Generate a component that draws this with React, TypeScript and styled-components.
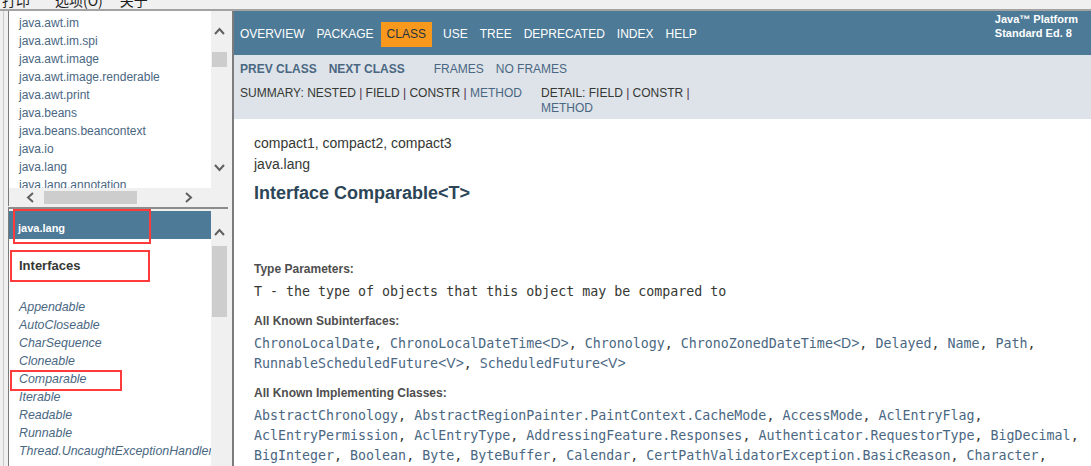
import React from "react";
import styled, { createGlobalStyle } from "styled-components";

const GlobalStyle = createGlobalStyle`
  html, body {
    margin: 0;
    padding: 0;
  }
  body {
    background: #f0f0f0;
    font-family: "Liberation Sans", Arial, sans-serif;
    overflow: hidden;
  }
`;

const Page = styled.div`
  width: 1091px;
  height: 466px;
  display: flex;
  flex-direction: column;
  overflow: hidden;
  background: #f0f0f0;
`;

/* window menu, almost scrolled out of view */
const MenuBar = styled.div`
  height: 9px;
  flex-shrink: 0;
  display: flex;
  overflow: hidden;
`;

const MenuItem = styled.span<{ $left: number }>`
  margin-left: ${(p) => p.$left}px;
  margin-top: -7px;
  font: 14px/14px "Noto Sans CJK SC", sans-serif;
  color: #1e1e1e;
  white-space: nowrap;
`;

const Frames = styled.div`
  flex: 1;
  display: flex;
  min-height: 0;
  border-top: 2px solid #a3a3a3;
`;

const LeftPane = styled.div`
  width: 232px;
  flex-shrink: 0;
  box-sizing: border-box;
  padding-left: 3px;
  display: flex;
`;

const LeftInner = styled.div`
  flex: 1;
  border-left: 1px solid #c9c9c9;
  padding-left: 4px;
  display: flex;
  flex-direction: column;
`;

const UpperFrame = styled.div`
  width: 220px;
  height: 195px;
  flex-shrink: 0;
  box-sizing: border-box;
  border-left: 1px solid #7a7a7a;
  display: grid;
  grid-template-columns: 202px 17px;
  grid-template-rows: 177px 18px;
`;

const PackageList = styled.div`
  background: #fff;
  overflow: hidden;
  padding: 3px 0 0 10px;
`;

const PackageLink = styled.div`
  font-size: 12px;
  line-height: 18px;
  color: #4a6782;
  white-space: nowrap;
`;

const VScroll = styled.div`
  background: #f0f0f0;
  display: flex;
  flex-direction: column;
  align-items: center;
  overflow: hidden;
`;

const ArrowButton = styled.div<{ $h: number }>`
  height: ${(p) => p.$h}px;
  flex-shrink: 0;
  display: flex;
  align-items: center;
  justify-content: center;
`;

const Thumb = styled.div<{ $h: number; $top: number }>`
  width: 15px;
  height: ${(p) => p.$h}px;
  margin-top: ${(p) => p.$top}px;
  flex-shrink: 0;
  background: #cdcdcd;
`;

const Spacer = styled.div`
  flex: 1;
`;

const HScroll = styled.div`
  background: #f0f0f0;
  display: flex;
  align-items: center;
  padding: 0 18px 0 17px;
`;

const HThumb = styled.div`
  width: 93px;
  height: 13px;
  margin-left: 9px;
  background: #cdcdcd;
`;

const Corner = styled.div`
  background: #f0f0f0;
`;

const LowerFrame = styled.div`
  flex: 1;
  width: 220px;
  min-height: 0;
  box-sizing: border-box;
  margin-top: 1px;
  border-top: 2px solid #8c8c8c;
  border-left: 1px solid #7a7a7a;
  padding-top: 2px;
  display: grid;
  grid-template-columns: 202px 17px;
`;

const ClassFrame = styled.div`
  background: #fff;
  position: relative;
  display: flex;
  flex-direction: column;
`;

const PackageHeader = styled.div`
  position: relative;
  height: 28px;
  box-sizing: border-box;
  padding: 5px 0 0 9px;
  display: flex;
  align-items: center;
  background: #4d7a97;
  color: #fff;
  font-size: 11px;
  font-weight: bold;
`;

const KindTitle = styled.div`
  position: relative;
  margin-top: 18px;
  padding-left: 10px;
  font-size: 13px;
  line-height: 18px;
  font-weight: bold;
  color: #353833;
`;

const InterfaceList = styled.div`
  margin-top: 23px;
  padding-left: 10px;
  overflow: hidden;
`;

const InterfaceLink = styled.div`
  position: relative;
  font-size: 12.4px;
  line-height: 18px;
  font-style: italic;
  color: #4a6782;
  white-space: nowrap;
`;

/* red annotation boxes drawn over the screenshot */
const Highlight = styled.span<{ $l: number; $t: number; $w: number; $h: number }>`
  position: absolute;
  left: ${(p) => p.$l}px;
  top: ${(p) => p.$t}px;
  width: ${(p) => p.$w}px;
  height: ${(p) => p.$h}px;
  box-sizing: border-box;
  border: 2px solid #ff3b3b;
  pointer-events: none;
  z-index: 2;
`;

const RightPane = styled.div`
  flex: 1;
  min-width: 0;
  border-left: 2px solid #7c7c7c;
  background: #fff;
  display: flex;
  flex-direction: column;
`;

const TopNav = styled.div`
  height: 44px;
  flex-shrink: 0;
  background: #4d7a97;
  display: flex;
  align-items: center;
`;

const NavItem = styled.span<{ $active?: boolean }>`
  padding: 5px 6px;
  margin-top: 2px;
  font-size: 12px;
  line-height: 15px;
  text-transform: uppercase;
  color: ${(p) => (p.$active ? "#253441" : "#fff")};
  background: ${(p) => (p.$active ? "#f8981d" : "transparent")};
  margin-left: ${(p) => (p.$active ? "1px" : "0")};
  margin-right: ${(p) => (p.$active ? "5px" : "0")};
`;

const AboutLanguage = styled.div`
  margin-left: auto;
  align-self: flex-start;
  padding: 1px 13px 0 0;
  font-size: 11px;
  line-height: 14px;
  font-weight: bold;
  color: #fff;
`;

const SubNav = styled.div`
  height: 64px;
  flex-shrink: 0;
  box-sizing: border-box;
  padding-top: 7px;
  background: #dee3e9;
  font-size: 12px;
  color: #353833;
`;

const SubRow = styled.div`
  display: flex;
  line-height: 14px;
`;

const SubLink = styled.span<{ $bold?: boolean; $gap?: number }>`
  padding: 0 6px;
  margin-left: ${(p) => p.$gap ?? 0}px;
  font-weight: ${(p) => (p.$bold ? "bold" : "normal")};
  color: #4a6782;
  white-space: nowrap;
`;

const SummaryRow = styled.div`
  display: flex;
  margin-top: 10px;
  line-height: 15px;
  text-transform: uppercase;
`;

const Summary = styled.div`
  width: 307px;
  padding-left: 6px;
  box-sizing: border-box;
  white-space: nowrap;
`;

const Detail = styled.div`
  width: 160px;
`;

const Pipe = styled.span`
  color: #4f2f4a;
`;

const Plain = styled.span`
  color: #4a6782;
`;

const Content = styled.div`
  padding: 14px 20px 0;
  color: #353833;
`;

const SubTitle = styled.div`
  font-size: 14px;
  line-height: 21px;
`;

const Title = styled.h2`
  margin: 7px 0 0;
  font-size: 18px;
  line-height: 22px;
  font-weight: bold;
  color: #2c4557;
`;

const DescList = styled.dl`
  margin: 57px 0 0;
`;

const Term = styled.dt`
  margin-top: 11px;
  font-size: 12px;
  line-height: 16px;
  font-weight: bold;
  color: #4e4e4e;
`;

const Def = styled.dd`
  margin: 5px 0 0;
  font-family: "DejaVu Sans Mono", monospace;
  font-size: 13.3px;
  line-height: 20px;
  white-space: nowrap;
`;

const CodeLink = styled.span`
  color: #4a6782;
`;

const Generic = styled.span`
  font-family: "Liberation Sans", Arial, sans-serif;
  font-size: 14px;
  line-height: 0;
`;

const Chevron = ({ dir }: { dir: "up" | "down" | "left" | "right" }) => {
  const pts = {
    up: "1,7 5.5,2 10,7",
    down: "1,2 5.5,7 10,2",
    left: "7,1 2,5.5 7,10",
    right: "2,1 7,5.5 2,10",
  }[dir];
  const vertical = dir === "up" || dir === "down";
  return (
    <svg width={vertical ? 11 : 9} height={vertical ? 9 : 11} viewBox={vertical ? "0 0 11 9" : "0 0 9 11"}>
      <polyline points={pts} fill="none" stroke="#606060" strokeWidth="2" />
    </svg>
  );
};

const packages = [
  "java.awt.im",
  "java.awt.im.spi",
  "java.awt.image",
  "java.awt.image.renderable",
  "java.awt.print",
  "java.beans",
  "java.beans.beancontext",
  "java.io",
  "java.lang",
  "java.lang.annotation",
];

const interfaces = [
  "Appendable",
  "AutoCloseable",
  "CharSequence",
  "Cloneable",
  "Comparable",
  "Iterable",
  "Readable",
  "Runnable",
  "Thread.UncaughtExceptionHandler",
];

const navItems = ["Overview", "Package", "Class", "Use", "Tree", "Deprecated", "Index", "Help"];

type Ref = { name: string; gen?: string };

const subinterfaces: Ref[][] = [
  [
    { name: "ChronoLocalDate" },
    { name: "ChronoLocalDateTime", gen: "<D>" },
    { name: "Chronology" },
    { name: "ChronoZonedDateTime", gen: "<D>" },
    { name: "Delayed" },
    { name: "Name" },
    { name: "Path" },
  ],
  [{ name: "RunnableScheduledFuture", gen: "<V>" }, { name: "ScheduledFuture", gen: "<V>" }],
];

const implementing: Ref[][] = [
  [
    { name: "AbstractChronology" },
    { name: "AbstractRegionPainter.PaintContext.CacheMode" },
    { name: "AccessMode" },
    { name: "AclEntryFlag" },
  ],
  [
    { name: "AclEntryPermission" },
    { name: "AclEntryType" },
    { name: "AddressingFeature.Responses" },
    { name: "Authenticator.RequestorType" },
    { name: "BigDecimal" },
  ],
  [
    { name: "BigInteger" },
    { name: "Boolean" },
    { name: "Byte" },
    { name: "ByteBuffer" },
    { name: "Calendar" },
    { name: "CertPathValidatorException.BasicReason" },
    { name: "Character" },
  ],
];

const RefLines = ({ lines, last }: { lines: Ref[][]; last: boolean }) => (
  <Def>
    {lines.map((line, li) => (
      <div key={li}>
        {line.map((r, i) => {
          const end = li === lines.length - 1 && i === line.length - 1 && last;
          return (
            <React.Fragment key={r.name}>
              <CodeLink>
                {r.name}
                {r.gen && <Generic>{r.gen}</Generic>}
              </CodeLink>
              {end ? "" : i === line.length - 1 ? "," : ", "}
            </React.Fragment>
          );
        })}
      </div>
    ))}
  </Def>
);

const App: React.FC = () => {
  return (
    <Page>
      <GlobalStyle />
      <MenuBar>
        <MenuItem $left={2}>打印</MenuItem>
        <MenuItem $left={25}>选项(O)</MenuItem>
        <MenuItem $left={17}>关于</MenuItem>
      </MenuBar>
      <Frames>
        <LeftPane>
          <LeftInner>
            <UpperFrame>
              <PackageList>
                {packages.map((p) => (
                  <PackageLink key={p}>{p}</PackageLink>
                ))}
              </PackageList>
              <VScroll>
                <ArrowButton $h={40}>
                  <Chevron dir="up" />
                </ArrowButton>
                <Thumb $h={15} $top={1} />
                <Spacer />
                <ArrowButton $h={41}>
                  <Chevron dir="down" />
                </ArrowButton>
              </VScroll>
              <HScroll>
                <Chevron dir="left" />
                <HThumb />
                <Spacer />
                <Chevron dir="right" />
              </HScroll>
              <Corner />
            </UpperFrame>
            <LowerFrame>
              <ClassFrame>
                <PackageHeader>
                  java.lang
                  <Highlight $l={4} $t={-2} $w={138} $h={35} />
                </PackageHeader>
                <KindTitle>
                  Interfaces
                  <Highlight $l={1} $t={-7} $w={140} $h={32} />
                </KindTitle>
                <InterfaceList>
                  {interfaces.map((name) => (
                    <InterfaceLink key={name}>
                      {name}
                      {name === "Comparable" && <Highlight $l={-9} $t={0} $w={112} $h={21} />}
                    </InterfaceLink>
                  ))}
                </InterfaceList>
              </ClassFrame>
              <VScroll>
                <ArrowButton $h={42}>
                  <Chevron dir="up" />
                </ArrowButton>
                <Thumb $h={71} $top={-7} />
              </VScroll>
            </LowerFrame>
          </LeftInner>
        </LeftPane>
        <RightPane>
          <TopNav>
            {navItems.map((n) => (
              <NavItem key={n} $active={n === "Class"}>
                {n}
              </NavItem>
            ))}
            <AboutLanguage>
              Java™ Platform
              <br />
              Standard Ed. 8
            </AboutLanguage>
          </TopNav>
          <SubNav>
            <SubRow>
              <SubLink $bold>PREV CLASS</SubLink>
              <SubLink $bold>NEXT CLASS</SubLink>
              <SubLink $gap={17}>FRAMES</SubLink>
              <SubLink>NO FRAMES</SubLink>
            </SubRow>
            <SummaryRow>
              <Summary>
                Summary: Nested <Pipe>|</Pipe> Field <Pipe>|</Pipe> Constr <Pipe>|</Pipe>{" "}
                <Plain>Method</Plain>
              </Summary>
              <Detail>
                Detail: Field <Pipe>|</Pipe> Constr <Pipe>|</Pipe> <Plain>Method</Plain>
              </Detail>
            </SummaryRow>
          </SubNav>
          <Content>
            <SubTitle>compact1, compact2, compact3</SubTitle>
            <SubTitle>java.lang</SubTitle>
            <Title>Interface Comparable&lt;T&gt;</Title>
            <DescList>
              <Term>Type Parameters:</Term>
              <Def>T - the type of objects that this object may be compared to</Def>
              <Term>All Known Subinterfaces:</Term>
              <RefLines lines={subinterfaces} last />
              <Term>All Known Implementing Classes:</Term>
              <RefLines lines={implementing} last={false} />
            </DescList>
          </Content>
        </RightPane>
      </Frames>
    </Page>
  );
};

export default App;
